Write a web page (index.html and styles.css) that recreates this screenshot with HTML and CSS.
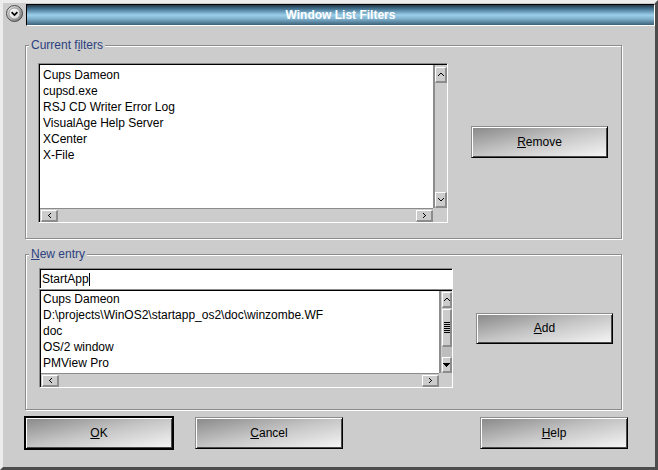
FILE: index.html
```html
<!DOCTYPE html>
<html>
<head>
<meta charset="utf-8">
<link rel="stylesheet" href="styles.css">
</head>
<body>
<div class="window">
  <div class="titlerow">
    <div class="sysmenu">
      <svg width="17" height="17" viewBox="0 0 17 17">
        <defs>
          <linearGradient id="ring" x1="0" y1="0" x2="1" y2="1">
            <stop offset="0" stop-color="#f4f4f4"/>
            <stop offset="1" stop-color="#6c6c6c"/>
          </linearGradient>
          <linearGradient id="core" x1="0" y1="0" x2="1" y2="1">
            <stop offset="0" stop-color="#ffffff"/>
            <stop offset="1" stop-color="#d4d4d4"/>
          </linearGradient>
        </defs>
        <circle cx="8.5" cy="8.5" r="8" fill="url(#ring)" stroke="#4a4a4a" stroke-width="1"/>
        <circle cx="8.5" cy="8.5" r="5.5" fill="url(#core)" stroke="#8a8a8a" stroke-width="0.8"/>
        <path d="M5.6 7.2L8.5 10.1L11.4 7.2" fill="none" stroke="#000" stroke-width="1.7"/>
      </svg>
    </div>
    <div class="titlebar">Window List Filters</div>
  </div>

  <div class="content">
    <div class="group g1">
      <span class="legend">Current f<u>i</u>lters</span>
      <div class="listbox lb1">
        <div class="lb-in">
          <ul class="items">
            <li>Cups Dameon</li>
            <li>cupsd.exe</li>
            <li>RSJ CD Writer Error Log</li>
            <li>VisualAge Help Server</li>
            <li>XCenter</li>
            <li>X-File</li>
          </ul>
          <div class="vscroll">
            <div class="sbtn vbtn">
              <svg width="6" height="3" viewBox="0 0 6 3" shape-rendering="crispEdges"><path d="M2 0h2v1H2zM1 1h1v1H1zM4 1h1v1H4zM0 2h1v1H0zM5 2h1v1H5z" fill="#000"/></svg>
            </div>
            <div class="sbtn vbtn down">
              <svg width="6" height="3" viewBox="0 0 6 3" shape-rendering="crispEdges"><path d="M0 0h1v1H0zM5 0h1v1H5zM1 1h1v1H1zM4 1h1v1H4zM2 2h2v1H2z" fill="#000"/></svg>
            </div>
          </div>
          <div class="hscroll">
            <div class="sbtn hbtn">
              <svg width="3" height="5" viewBox="0 0 3 5" shape-rendering="crispEdges"><path d="M2 0h1v1H2zM1 1h1v1H1zM0 2h1v1H0zM1 3h1v1H1zM2 4h1v1H2z" fill="#000"/></svg>
            </div>
            <div class="sbtn hbtn right">
              <svg width="3" height="5" viewBox="0 0 3 5" shape-rendering="crispEdges"><path d="M0 0h1v1H0zM1 1h1v1H1zM2 2h1v1H2zM1 3h1v1H1zM0 4h1v1H0z" fill="#000"/></svg>
            </div>
          </div>
          <div class="corner"></div>
        </div>
      </div>
      <button class="btn btn-side btn-remove"><u>R</u>emove</button>
    </div>

    <div class="group g2">
      <span class="legend"><u>N</u>ew entry</span>
      <div class="entry-col">
        <div class="entry">
          <div class="entry-in">StartApp<span class="caret"></span></div>
        </div>
        <div class="listbox lb2">
          <div class="lb-in">
            <ul class="items">
              <li>Cups Dameon</li>
              <li>D:\projects\WinOS2\startapp_os2\doc\winzombe.WF</li>
              <li>doc</li>
              <li>OS/2 window</li>
              <li>PMView Pro</li>
            </ul>
            <div class="vscroll">
              <div class="sbtn vbtn">
                <svg width="6" height="3" viewBox="0 0 6 3" shape-rendering="crispEdges"><path d="M2 0h2v1H2zM1 1h1v1H1zM4 1h1v1H4zM0 2h1v1H0zM5 2h1v1H5z" fill="#000"/></svg>
              </div>
              <div class="sbtn thumb">
                <svg width="6" height="11" viewBox="0 0 6 11" shape-rendering="crispEdges"><path d="M0 0h6v1H0zM0 2h6v1H0zM0 4h6v1H0zM0 6h6v1H0zM0 8h6v1H0zM0 10h6v1H0z" fill="#000"/></svg>
              </div>
              <div class="trough"></div>
              <div class="sbtn vbtn">
                <svg width="7" height="4" viewBox="0 0 7 4" shape-rendering="crispEdges"><path d="M0 0h7v1H0zM1 1h5v1H1zM2 2h3v1H2zM3 3h1v1H3z" fill="#000"/></svg>
              </div>
            </div>
            <div class="hscroll">
              <div class="sbtn hbtn">
                <svg width="3" height="5" viewBox="0 0 3 5" shape-rendering="crispEdges"><path d="M2 0h1v1H2zM1 1h1v1H1zM0 2h1v1H0zM1 3h1v1H1zM2 4h1v1H2z" fill="#000"/></svg>
              </div>
              <div class="sbtn hbtn right">
                <svg width="3" height="5" viewBox="0 0 3 5" shape-rendering="crispEdges"><path d="M0 0h1v1H0zM1 1h1v1H1zM2 2h1v1H2zM1 3h1v1H1zM0 4h1v1H0z" fill="#000"/></svg>
              </div>
            </div>
            <div class="corner"></div>
          </div>
        </div>
      </div>
      <button class="btn btn-side btn-add"><u>A</u>dd</button>
    </div>

    <div class="buttons">
      <button class="btn btn-main btn-default"><u>O</u>K</button>
      <button class="btn btn-main btn-cancel"><u>C</u>ancel</button>
      <button class="btn btn-main btn-help"><u>H</u>elp</button>
    </div>
  </div>
</div>
</body>
</html>
```

FILE: styles.css
```css
* {
  box-sizing: border-box;
}

html,
body {
  margin: 0;
  padding: 0;
}

body {
  width: 658px;
  height: 470px;
  overflow: hidden;
  background: #cccccc;
  font-family: "Liberation Sans", Arial, sans-serif;
  font-size: 12px;
  color: #000;
}

.window {
  width: 658px;
  height: 470px;
  border: 3px solid;
  border-color: #ececec #4c4c4c #4c4c4c #ececec;
  background: #cccccc;
}

/* ---------- title ---------- */
.titlerow {
  display: flex;
  height: 22px;
  margin-top: 1px;
}

.sysmenu {
  width: 17px;
  height: 17px;
  margin: 1px 0 0 3px;
}

.sysmenu svg {
  display: block;
}

.titlebar {
  flex: 1;
  margin-left: 3px;
  border: 1px solid;
  border-color: #000 #fff #fff #000;
  background: linear-gradient(#22384a 0%, #4a7a98 22%, #9ccfea 50%, #82b4d0 68%, #3c6179 100%);
  color: #fff;
  font-weight: bold;
  text-align: center;
  line-height: 20px;
}

/* ---------- content ---------- */
.content {
  padding: 19px 27px 0 22px;
}

.group {
  position: relative;
  width: 597px;
  display: flex;
  align-items: center;
  border: 1px solid #8c8c8c;
  box-shadow: inset 1px 1px 0 #fff, 1px 1px 0 #fff;
}

.g1 {
  height: 194px;
  padding: 17px 0 15px 12px;
}

.g2 {
  height: 156px;
  margin-top: 15px;
  padding: 13px 0 21px 13px;
}

.legend {
  position: absolute;
  top: -8px;
  left: 3px;
  padding: 0 2px;
  background: #cccccc;
  color: #2d4180;
  line-height: 14px;
}

/* ---------- list boxes ---------- */
.listbox {
  border: 1px solid;
  border-color: #8c8c8c #fff #fff #8c8c8c;
}

.lb-in {
  height: 100%;
  display: grid;
  border-top: 1px solid #000;
  border-left: 1px solid #000;
  background: #cccccc;
}

.lb1 {
  width: 410px;
  height: 160px;
}

.lb1 .lb-in {
  grid-template-columns: 1fr 14px;
  grid-template-rows: 1fr 14px;
}

.lb2 {
  width: 414px;
  height: 99px;
}

.lb2 .lb-in {
  grid-template-columns: 1fr 13px;
  grid-template-rows: 1fr 14px;
}

.items {
  list-style: none;
  margin: 0;
  padding: 2px 0 0 3px;
  background: #fff;
  line-height: 16px;
  white-space: nowrap;
  overflow: hidden;
}

.lb2 .items {
  padding: 0 0 0 2px;
}

.vscroll {
  display: flex;
  flex-direction: column;
  border-left: 2px solid #8c8c8c;
  padding-top: 2px;
  background: #cccccc;
}

.lb2 .vscroll {
  padding: 1px 0 0 1px;
}

.sbtn {
  display: flex;
  align-items: center;
  justify-content: center;
  background: #cccccc;
  border-style: solid;
  border-width: 1px 2px 2px 1px;
  border-color: #fff #8c8c8c #8c8c8c #fff;
}

.sbtn svg {
  display: block;
}

.vbtn {
  width: 12px;
  height: 16px;
  flex: none;
}

.lb2 .vbtn {
  width: 10px;
}

.down {
  margin-top: auto;
}

.thumb {
  width: 10px;
  height: 38px;
  margin-top: 1px;
  flex: none;
}

.trough {
  flex: 1;
  background: #bdbdbd;
}

.hscroll {
  display: flex;
  border-top: 1px solid #8c8c8c;
  padding: 1px 0 0 1px;
  background: #cccccc;
}

.hbtn {
  width: 17px;
  height: 12px;
}

.right {
  margin-left: auto;
}

.corner {
  background: #cccccc;
}

/* ---------- entry ---------- */
.entry-col {
  display: flex;
  flex-direction: column;
  width: 414px;
}

.entry {
  height: 21px;
  border: 1px solid;
  border-color: #8c8c8c #fff #fff #8c8c8c;
}

.entry-in {
  height: 100%;
  border-top: 1px solid #000;
  border-left: 1px solid #000;
  background: #fff;
  padding: 1px 0 0 1px;
  line-height: 16px;
  white-space: nowrap;
}

.caret {
  display: inline-block;
  width: 1px;
  height: 13px;
  background: #000;
  vertical-align: -3px;
}

/* ---------- buttons ---------- */
.btn {
  font-family: "Liberation Sans", Arial, sans-serif;
  font-size: 12px;
  color: #000;
  padding: 0;
  border: 1px solid;
  border-color: #8c8c8c #000 #000 #8c8c8c;
  box-shadow: inset 1px 1px 0 #fff, inset -1px -1px 0 #4a4a4a;
  background: linear-gradient(to bottom right, #888888 0%, #c4c4c4 48%, #f6f6f6 100%);
}

.btn-side {
  width: 137px;
  height: 32px;
  margin-left: 23px;
  flex: none;
}

.btn-remove {
  margin-bottom: 2px;
}

.btn-add {
  height: 31px;
}

.buttons {
  display: flex;
  margin-top: 7px;
}

.btn-main {
  width: 148px;
  height: 32px;
}

.btn-default {
  border-color: #000;
  outline: 1px solid #000;
}

.btn-cancel {
  margin-left: 22px;
}

.btn-help {
  margin-left: auto;
}
```
